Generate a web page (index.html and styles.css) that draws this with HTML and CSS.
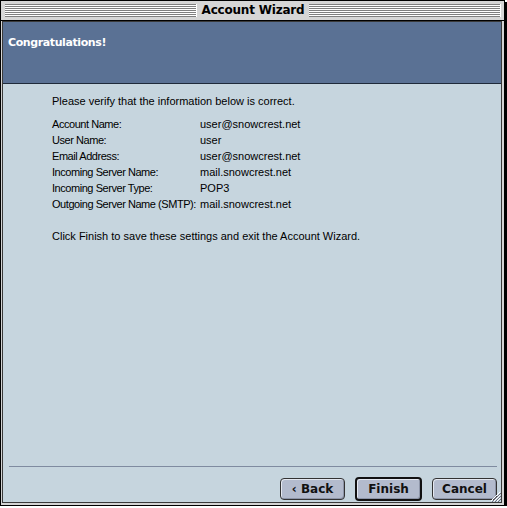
FILE: index.html
```html
<!DOCTYPE html>
<html lang="en">
<head>
    <meta charset="UTF-8">
    <title>Account Wizard</title>
    <link rel="stylesheet" href="styles.css">
</head>
<body>
    <div class="window">
        <div class="titlebar">
            <span class="stripes"></span>
            <span class="title">Account Wizard</span>
            <span class="stripes"></span>
        </div>
        <div class="frame">
            <div class="pane">
                <div class="banner">
                    <h1>Congratulations!</h1>
                </div>
                <div class="content">
                    <p class="intro">Please verify that the information below is correct.</p>
                    <div class="summary">
                        <span class="label">Account Name:</span><span>user@snowcrest.net</span>
                        <span class="label">User Name:</span><span>user</span>
                        <span class="label">Email Address:</span><span>user@snowcrest.net</span>
                        <span class="label">Incoming Server Name:</span><span>mail.snowcrest.net</span>
                        <span class="label">Incoming Server Type:</span><span>POP3</span>
                        <span class="label">Outgoing Server Name (SMTP):</span><span>mail.snowcrest.net</span>
                    </div>
                    <p class="outro">Click Finish to save these settings and exit the Account Wizard.</p>
                </div>
                <div class="footer">
                    <div class="rule"></div>
                    <div class="buttons">
                        <button class="btn">&lsaquo; Back</button>
                        <button class="btn default">Finish</button>
                        <button class="btn">Cancel</button>
                    </div>
                </div>
            </div>
        </div>
        <svg class="grip" width="11" height="11" viewBox="0 0 11 11">
            <path d="M10 1 L1 10 M10 4 L4 10 M10 7 L7 10" stroke="#ffffff" stroke-width="1"/>
            <path d="M11 2 L2 11 M11 5 L5 11 M11 8 L8 11" stroke="#6b6b7a" stroke-width="1"/>
        </svg>
    </div>
</body>
</html>
```

FILE: styles.css
```css
* {
    margin: 0;
    padding: 0;
    box-sizing: border-box;
}
body {
    background: #ffffff;
    font-family: 'Liberation Sans', Arial, sans-serif;
    font-size: 11px;
    color: #000;
}
.window {
    position: relative;
    width: 505px;
    height: 506px;
    border: 1px solid #000;
    background: #d4d4d4;
    box-shadow: 2px 2px 0 #000;
    display: flex;
    flex-direction: column;
}
.titlebar {
    height: 20px;
    border-bottom: 1px solid #000;
    display: flex;
    align-items: center;
    padding: 0 3px 0 4px;
    background: #d6d6d6;
}
.stripes {
    flex: 1;
    height: 13px;
    background: repeating-linear-gradient(to bottom, #7f7f7f 0, #7f7f7f 1px, #ffffff 1px, #ffffff 2px);
    border-right: 1px solid #fff;
}
.title {
    font-family: 'DejaVu Sans', sans-serif;
    font-weight: bold;
    font-size: 12px;
    letter-spacing: -0.2px;
    padding: 0 5px;
    line-height: 19px;
}
.frame {
    flex: 1;
    padding: 0 2px 2px 1px;
    display: flex;
}
.pane {
    flex: 1;
    border: 1px solid #3a3a3a;
    background: #c6d5de;
    display: flex;
    flex-direction: column;
}
.banner {
    height: 62px;
    background: #5a7194;
    border-bottom: 1px solid #1f2a3a;
    padding: 15px 0 0 5px;
}
.banner h1 {
    font-family: 'DejaVu Sans', sans-serif;
    font-weight: bold;
    font-size: 11px;
    letter-spacing: -0.4px;
    line-height: 12px;
    color: #ffffff;
}
.content {
    flex: 1;
    padding: 9px 0 0 49px;
    line-height: 16px;
}
.intro {
    margin-bottom: 7px;
}
.summary {
    display: grid;
    grid-template-columns: 148px auto;
    white-space: nowrap;
}
.summary .label {
    letter-spacing: -0.45px;
}
.outro {
    margin-top: 16px;
}
.footer {
    padding: 0 4px 1px 6px;
}
.rule {
    height: 1px;
    background: #7f8ba0;
    margin-bottom: 9px;
}
.buttons {
    display: flex;
    justify-content: flex-end;
    align-items: center;
    gap: 10px;
    height: 25px;
}
.btn {
    font-family: 'DejaVu Sans', sans-serif;
    font-weight: bold;
    font-size: 12px;
    width: 65px;
    height: 22px;
    border: 1px solid #333;
    border-radius: 4px;
    background: #b3bbcd;
    color: #111;
    box-shadow: inset 1px 1px 0 #e4e8f0, inset -1px -1px 0 #8d95a8;
}
.btn.default {
    width: 67px;
    height: 24px;
    border: 2px solid #111;
}
.grip {
    position: absolute;
    right: 3px;
    bottom: 3px;
}
```
